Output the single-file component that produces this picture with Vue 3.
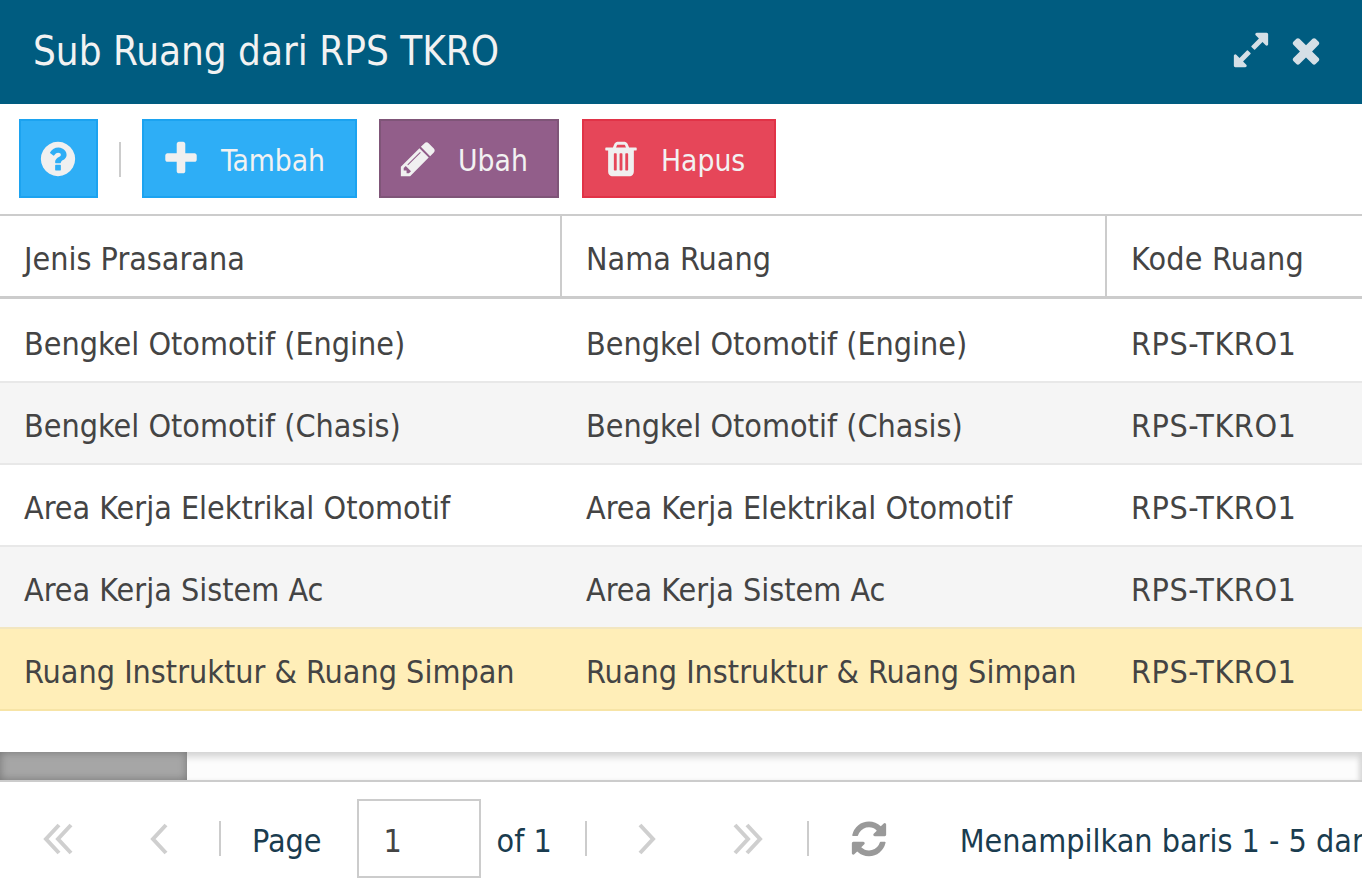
<script setup>
const columns = ['Jenis Prasarana', 'Nama Ruang', 'Kode Ruang']
const names = [
  'Bengkel Otomotif (Engine)',
  'Bengkel Otomotif (Chasis)',
  'Area Kerja Elektrikal Otomotif',
  'Area Kerja Sistem Ac',
  'Ruang Instruktur & Ruang Simpan'
]
const rows = names.map((name, i) => ({ name, code: 'RPS-TKRO1', alt: i % 2 === 1, selected: i === 4 }))
</script>

<template>
  <div class="dialog">
    <header class="title-bar">
      <h1 class="title">Sub Ruang dari RPS TKRO</h1>
      <div class="title-tools">
        <svg class="tool" viewBox="0 0 1792 1792"><path d="M883 1056q0 13-10 23l-332 332 144 144q19 19 19 45t-19 45-45 19H192q-26 0-45-19t-19-45v-448q0-26 19-45t45-19 45 19l144 144 332-332q10-10 23-10t23 10l114 114q10 10 10 23zm781-864v448q0 26-19 45t-45 19-45-19l-144-144-332 332q-10 10-23 10t-23-10L919 759q-10-10-10-23t10-23l332-332-144-144q-19-19-19-45t19-45 45-19h448q26 0 45 19t19 45z"/></svg>
        <svg class="tool" viewBox="0 0 1792 1792"><path d="M1490 1322q0 40-28 68l-136 136q-28 28-68 28t-68-28l-294-294-294 294q-28 28-68 28t-68-28l-136-136q-28-28-28-68t28-68l294-294-294-294q-28-28-28-68t28-68l136-136q28-28 68-28t68 28l294 294 294-294q28-28 68-28t68 28l136 136q28 28 28 68t-28 68l-294 294 294 294q28 28 28 68z"/></svg>
      </div>
    </header>

    <div class="toolbar">
      <button class="btn blue help">
        <svg class="ico" viewBox="0 0 1792 1792"><path d="M1024 1376v-192q0-14-9-23t-23-9H800q-14 0-23 9t-9 23v192q0 14 9 23t23 9h192q14 0 23-9t9-23zm256-672q0-88-55.5-163T1086 425t-170-41q-243 0-371 213-15 24 8 42l132 100q7 6 19 6 16 0 25-12 53-68 86-92 34-24 86-24 48 0 85.5 26t37.5 59q0 38-20 61t-68 45q-63 28-115.5 86.5T768 1020v36q0 14 9 23t23 9h192q14 0 23-9t9-23q0-19 21.5-49.5T1100 957q32-18 49-28.5t46-35 44.5-48 28-60.5 12.5-81zm384 192q0 209-103 385.5T1281.5 1561 896 1664t-385.5-103T231 1281.5 128 896t103-385.5T510.5 231 896 128t385.5 103T1561 510.5 1664 896z"/></svg>
      </button>
      <span class="tb-sep"></span>
      <button class="btn blue add">
        <svg class="ico" viewBox="0 0 1792 1792"><path d="M1600 736v192q0 40-28 68t-68 28h-416v416q0 40-28 68t-68 28H800q-40 0-68-28t-28-68v-416H288q-40 0-68-28t-28-68V736q0-40 28-68t68-28h416V224q0-40 28-68t68-28h192q40 0 68 28t28 68v416h416q40 0 68 28t28 68z"/></svg>
        <span>Tambah</span>
      </button>
      <button class="btn purple edit">
        <svg class="ico" viewBox="0 0 1792 1792"><path d="M491 1536l91-91-235-235-91 91v107h128v128h107zm523-928q0-22-22-22-10 0-17 7l-542 542q-7 7-7 17 0 22 22 22 10 0 17-7l542-542q7-7 7-17zm-54-192l416 416-832 832H128v-416zm683 96q0 53-37 90l-166 166-416-416 166-165q36-38 90-38 53 0 91 38l235 234q37 39 37 91z"/></svg>
        <span>Ubah</span>
      </button>
      <button class="btn red del">
        <svg class="ico" viewBox="0 0 1792 1792"><path d="M704 1376V672q0-14-9-23t-23-9h-64q-14 0-23 9t-9 23v704q0 14 9 23t23 9h64q14 0 23-9t9-23zm256 0V672q0-14-9-23t-23-9h-64q-14 0-23 9t-9 23v704q0 14 9 23t23 9h64q14 0 23-9t9-23zm256 0V672q0-14-9-23t-23-9h-64q-14 0-23 9t-9 23v704q0 14 9 23t23 9h64q14 0 23-9t9-23zM672 384h448l-48-117q-7-9-17-11H738q-10 2-17 11zm928 32v64q0 14-9 23t-23 9h-96v948q0 83-47 143.5t-113 60.5H480q-66 0-113-58.5T320 1464V512h-96q-14 0-23-9t-9-23v-64q0-14 9-23t23-9h309l70-167q15-37 54-63t79-26h320q40 0 79 26t54 63l70 167h309q14 0 23 9t9 23z"/></svg>
        <span>Hapus</span>
      </button>
    </div>

    <div class="grid">
      <div class="row head">
        <div v-for="c in columns" :key="c" class="cell">{{ c }}</div>
      </div>
      <div class="grid-body">
        <div
          v-for="r in rows"
          :key="r.name"
          class="row body"
          :class="{ alt: r.alt, selected: r.selected }"
        >
          <div class="cell">{{ r.name }}</div>
          <div class="cell">{{ r.name }}</div>
          <div class="cell">{{ r.code }}</div>
        </div>
      </div>
    </div>

    <div class="spacer"></div>

    <div class="scrollbar"><div class="thumb"></div></div>

    <footer class="pager">
      <button class="pg">
        <svg class="chev wide" viewBox="0 0 32 32"><path d="M16 2 3 16l13 14M28 2 15 16l13 14"/></svg>
      </button>
      <button class="pg">
        <svg class="chev" viewBox="0 0 20 32"><path d="M17 2 4 16l13 14"/></svg>
      </button>
      <span class="pg-sep"></span>
      <span class="label page-label">Page</span>
      <input class="page-input" value="1" />
      <span class="label of-label">of 1</span>
      <span class="pg-sep"></span>
      <button class="pg">
        <svg class="chev" viewBox="0 0 20 32"><path d="M3 2l13 14L3 30"/></svg>
      </button>
      <button class="pg">
        <svg class="chev wide" viewBox="0 0 32 32"><path d="M4 2l13 14L4 30M16 2l13 14-13 14"/></svg>
      </button>
      <span class="pg-sep"></span>
      <button class="pg refresh">
        <svg viewBox="0 0 1792 1792"><path d="M1639 1056q0 5-1 7-64 268-268 434.5T892 1664q-146 0-282.5-55T366 1452l-129 129q-19 19-45 19t-45-19-19-45v-448q0-26 19-45t45-19h448q26 0 45 19t19 45-19 45l-137 137q71 66 161 102t187 36q134 0 250-65t186-179q11-17 53-117 8-23 30-23h192q13 0 22.5 9.5t9.5 22.5zm25-800v448q0 26-19 45t-45 19h-448q-26 0-45-19t-19-45 19-45l138-138Q1096 372 896 372q-134 0-250 65T460 616q-11 17-53 117-8 23-30 23H178q-13 0-22.5-9.5T146 724v-7q65-268 270-434.5T896 116q146 0 284 55.5T1425 328l130-129q19-19 45-19t45 19 19 45z"/></svg>
      </button>
      <span class="label info">Menampilkan baris 1 - 5 dari 5</span>
    </footer>
  </div>
</template>

<style>
html, body { margin: 0; background: #fff; overflow: hidden; }
</style>

<style scoped>
.dialog {
  width: 1362px;
  height: 890px;
  display: flex;
  flex-direction: column;
  overflow: hidden;
  background: #fff;
  font-family: "DejaVu Sans Condensed", "DejaVu Sans", sans-serif;
  font-size: 32px;
  color: #444;
}
.title-bar {
  height: 104px;
  flex: none;
  background: #005c80;
  display: flex;
  align-items: center;
  justify-content: space-between;
  padding: 0 36px 0 33px;
}
.title {
  margin: 0 0 2px;
  font-size: 40px;
  font-weight: 400;
  color: #f2f2f2;
}
.title-tools { display: flex; align-items: center; gap: 15px; margin-bottom: 5px; }
.tool { fill: #d5dfe6; display: block; width: 40px; height: 40px; }

.toolbar {
  height: 110px;
  flex: none;
  box-sizing: border-box;
  padding: 15px 0 0 19px;
  display: flex;
  align-items: flex-start;
}
.btn {
  height: 79px;
  box-sizing: border-box;
  border-width: 2px;
  border-style: solid;
  display: flex;
  align-items: center;
  padding: 0;
  color: #f2f2f2;
  font: inherit;
  font-size: 29.7px;
}
.btn span { padding-top: 4px; }
.blue { background: #2eaef6; border-color: #1ca3f0; }
.purple { background: #925e8a; border-color: #7f5578; }
.red { background: #e64659; border-color: #e13347; }
.ico { fill: #f0f0f0; width: 40px; height: 40px; flex: none; display: block; }
.help { width: 79px; justify-content: center; padding-right: 2px; }
.tb-sep { width: 2px; height: 35px; margin: 23px 21px 0 21px; background: #ccc; }
.add { width: 215px; padding-left: 17px; gap: 20px; margin-right: 22px; }
.edit { width: 180px; padding-left: 17px; gap: 20px; margin-right: 23px; }
.del { width: 194px; padding-left: 17px; gap: 20px; }

.grid { border-top: 2px solid #ccc; flex: none; }
.grid-body { padding-top: 2px; }
.row { display: flex; }
.cell {
  flex: none;
  box-sizing: border-box;
  padding: 5px 0 0 24px;
  white-space: nowrap;
  display: flex;
  align-items: center;
}
.cell:nth-child(1) { width: 562px; }
.cell:nth-child(2) { width: 545px; }
.cell:nth-child(3) { width: 255px; }
.head { height: 83px; border-bottom: 3px solid #ccc; box-sizing: border-box; }
.head .cell { border-right: 2px solid #ccc; }
.head .cell:last-child { border-right: 0; letter-spacing: 0.2px; }
.body { height: 82px; border-bottom: 2px solid #e8e8e8; box-sizing: border-box; }
.body .cell:nth-child(3) { letter-spacing: 0.55px; }
.body.alt { background: #f5f5f5; }
.body.selected { background: #ffeeb8; border-bottom-color: #f7e4a6; box-shadow: 0 -2px 0 #f2e6c0; }

.spacer { flex: 1; }
.scrollbar {
  height: 30px;
  flex: none;
  box-sizing: border-box;
  border-bottom: 2px solid #ccc;
  background: #fcfcfc;
  box-shadow: inset 0 8px 7px -3px #d4d4d4, inset -5px 0 5px -2px #d8d8d8;
}
.thumb {
  width: 187px;
  height: 28px;
  background: #a6a6a6;
  box-shadow: inset 0 0 8px #747474;
}

.pager {
  height: 108px;
  flex: none;
  box-sizing: border-box;
  padding: 5px 0 0 9px;
  display: flex;
  align-items: center;
  white-space: nowrap;
}
.pg {
  width: 100px;
  height: 60px;
  flex: none;
  border: 0;
  padding: 0;
  background: none;
  display: flex;
  align-items: center;
  justify-content: center;
}
.chev { width: 20px; height: 32px; fill: none; stroke: #cfcfcf; stroke-width: 4; }
.chev.wide { width: 32px; }
.pg-sep { width: 2px; height: 35px; flex: none; background: #ccc; margin: 0 10px; }
.label { color: #1a3c4f; padding-top: 4px; }
.page-label { margin-left: 21px; margin-right: 35px; }
.page-input {
  width: 124px;
  height: 79px;
  flex: none;
  box-sizing: border-box;
  border: 2px solid #ccc;
  outline: 0;
  padding: 5px 0 0 25px;
  font: inherit;
  color: #444;
  margin-right: 16px;
}
.of-label { margin-right: 23px; }
.refresh svg { width: 40px; height: 40px; fill: #999; display: block; }
.info { margin-left: 41px; }
</style>
